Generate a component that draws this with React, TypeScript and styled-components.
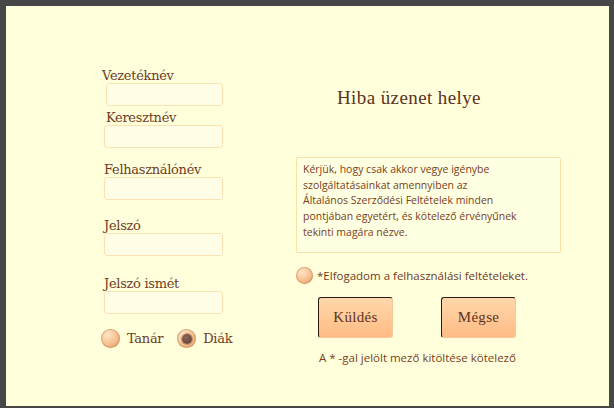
import React from "react";
import styled, { createGlobalStyle } from "styled-components";

const Global = createGlobalStyle`
  html, body { margin: 0; padding: 0; }
  body {
    background: #474747;
    width: 614px;
    height: 408px;
    overflow: hidden;
  }
`;

const Panel = styled.div`
  margin: 6px 0 0 6px;
  width: 603px;
  height: 400px;
  background: #ffffdc;
  display: flex;
  box-sizing: border-box;
  padding: 62px 0 0 95px;
  color: #6e3b1e;
`;

const LeftCol = styled.div`
  width: 170px;
  display: flex;
  flex-direction: column;
`;

const Field = styled.div<{ $top: number; $lx: number; $ix: number; $w?: number }>`
  display: flex;
  flex-direction: column;
  margin-top: ${(p) => p.$top}px;
  label {
    margin-left: ${(p) => p.$lx}px;
  }
  input {
    margin-left: ${(p) => p.$ix}px;
    width: ${(p) => p.$w ?? 119}px;
  }
`;

const Label = styled.label`
  font-family: "DejaVu Serif", serif;
  font-size: 13px;
  line-height: 15px;
  letter-spacing: -0.3px;
  color: #6e3b1e;
`;

const Input = styled.input`
  box-sizing: border-box;
  height: 23px;
  margin-top: 0px;
  border: 1px solid #fbe2b0;
  border-radius: 3px;
  background: #fffde6;
  outline: none;
`;

const RadioRow = styled.div`
  display: flex;
  align-items: center;
  margin-top: 15px;
  margin-left: 0px;
`;

const RadioBall = styled.span<{ $checked?: boolean }>`
  width: 19px;
  height: 19px;
  border-radius: 50%;
  box-sizing: border-box;
  background: radial-gradient(circle at 35% 30%, #ffe6c8 0%, #f5be8e 55%, #d88e58 100%);
  box-shadow: inset 0 0 0 1px rgba(200, 130, 80, 0.5);
  display: flex;
  align-items: center;
  justify-content: center;
  flex-shrink: 0;
  &::after {
    content: "";
    display: ${(p) => (p.$checked ? "block" : "none")};
    width: 10px;
    height: 10px;
    border-radius: 50%;
    background: radial-gradient(circle at 40% 35%, #8d6a58 0%, #5a3a2c 100%);
    box-shadow: 0 0 0 1px #c89070;
  }
`;

const RadioText = styled.span<{ $gap: number; $after: number }>`
  font-family: "DejaVu Serif", serif;
  font-size: 13px;
  letter-spacing: -0.3px;
  margin-left: ${(p) => p.$gap}px;
  margin-right: ${(p) => p.$after}px;
`;

const RightCol = styled.div`
  margin-left: 25px;
  width: 270px;
  display: flex;
  flex-direction: column;
`;

const Title = styled.div`
  margin: 19px 0 2px 41px;
  font-family: "Liberation Serif", "DejaVu Serif", serif;
  font-weight: normal;
  font-size: 19px;
  line-height: 22px;
  letter-spacing: 0.4px;
  color: #5e321c;
`;

const Terms = styled.div`
  margin-top: 46px;
  width: 265px;
  height: 96px;
  box-sizing: border-box;
  border: 1px solid #fbe0a8;
  border-radius: 2px;
  background: #ffffe2;
  padding: 4px 6px;
  font-family: "Open Sans", sans-serif;
  font-size: 10.5px;
  line-height: 15.7px;
  color: #7a4020;
`;

const AcceptRow = styled.div`
  display: flex;
  align-items: center;
  margin-top: 14px;
  font-family: "Open Sans", sans-serif;
  font-size: 11.5px;
  color: #6e3b1e;
  span:last-child {
    margin-left: 4px;
  }
`;

const SmallBall = styled(RadioBall)`
  width: 17px;
  height: 17px;
`;

const Buttons = styled.div`
  display: flex;
  gap: 48px;
  margin: 13px 0 0 22px;
`;

const Button = styled.button`
  width: 75px;
  height: 41px;
  box-sizing: border-box;
  border: 1px solid #f6c79a;
  border-top-color: #2a1a10;
  border-left-color: #2a1a10;
  border-radius: 3px;
  background: linear-gradient(#ffd8ac, #ffbb84);
  font-family: "Liberation Serif", "DejaVu Serif", serif;
  font-size: 15px;
  letter-spacing: 0.3px;
  color: #5e321c;
  padding: 0;
`;

const Note = styled.div`
  margin: 12px 0 0 23px;
  font-family: "Open Sans", sans-serif;
  font-size: 11.5px;
  color: #7a4020;
`;

export default function App() {
  return (
    <>
      <Global />
      <Panel>
        <LeftCol>
          <Field $top={0} $lx={1} $ix={5} $w={117}>
            <Label>Vezetéknév</Label>
            <Input />
          </Field>
          <Field $top={4} $lx={5} $ix={3}>
            <Label>Keresztnév</Label>
            <Input />
          </Field>
          <Field $top={14} $lx={3} $ix={3}>
            <Label>Felhasználónév</Label>
            <Input />
          </Field>
          <Field $top={18} $lx={3} $ix={3}>
            <Label>Jelszó</Label>
            <Input />
          </Field>
          <Field $top={20} $lx={3} $ix={3}>
            <Label>Jelszó ismét</Label>
            <Input />
          </Field>
          <RadioRow>
            <RadioBall />
            <RadioText $gap={7} $after={14}>Tanár</RadioText>
            <RadioBall $checked />
            <RadioText $gap={7} $after={0}>Diák</RadioText>
          </RadioRow>
        </LeftCol>
        <RightCol>
          <Title>Hiba üzenet helye</Title>
          <Terms>
            Kérjük, hogy csak akkor vegye igénybe
            <br />
            szolgáltatásainkat amennyiben az
            <br />
            Általános Szerződési Feltételek minden
            <br />
            pontjában egyetért, és kötelező érvényűnek
            <br />
            tekinti magára nézve.
          </Terms>
          <AcceptRow>
            <SmallBall />
            <span>*Elfogadom a felhasználási feltételeket.</span>
          </AcceptRow>
          <Buttons>
            <Button>Küldés</Button>
            <Button>Mégse</Button>
          </Buttons>
          <Note>A * -gal jelölt mező kitöltése kötelező</Note>
        </RightCol>
      </Panel>
    </>
  );
}
